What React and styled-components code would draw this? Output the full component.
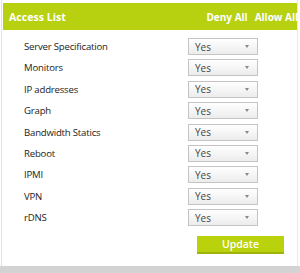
import styled, { createGlobalStyle } from "styled-components";

const Global = createGlobalStyle`
  body {
    margin: 0;
    background: #fff;
    font-family: "Open Sans", "Noto Sans", sans-serif;
  }
`;

const items = [
  "Server Specification",
  "Monitors",
  "IP addresses",
  "Graph",
  "Bandwidth Statics",
  "Reboot",
  "IPMI",
  "VPN",
  "rDNS",
];

function App() {
  return (
    <>
      <Global />
      <Page>
        <Panel>
          <Header>
            <Title>Access List</Title>
            <Actions>
              <Action>Deny All</Action>
              <Action>Allow All</Action>
            </Actions>
          </Header>
          <List>
            {items.map((name) => (
              <Row key={name}>
                <Label>{name}</Label>
                <Select>
                  <span>Yes</span>
                  <Arrow />
                </Select>
              </Row>
            ))}
          </List>
          <Footer>
            <Button>Update</Button>
          </Footer>
        </Panel>
        <Bottom />
      </Page>
    </>
  );
}

const Page = styled.div`
  width: 300px;
  height: 273px;
  overflow: hidden;
  display: flex;
  flex-direction: column;
`;

const Panel = styled.div`
  flex: 1;
  margin-left: 1px;
  width: 297px;
  border-left: 1px solid #e2e2e2;
  border-right: 1px solid #e8e8e8;
  padding-top: 3px;
  box-sizing: border-box;
  display: flex;
  flex-direction: column;
`;

const Header = styled.div`
  height: 27px;
  margin-left: 1px;
  background: #b7d00f;
  display: flex;
  align-items: center;
  justify-content: space-between;
  padding-left: 6px;
  color: #fff;
  font-weight: 700;
  font-size: 10.6px;
  white-space: nowrap;
`;

const Title = styled.div``;

const Actions = styled.div`
  display: flex;
  gap: 7px;
  font-size: 10px;
  margin-right: -1px;
`;

const Action = styled.div``;

const List = styled.div`
  display: flex;
  flex-direction: column;
  gap: 4.4px;
  margin-top: 8px;
  padding-left: 22px;
`;

const Row = styled.div`
  display: grid;
  grid-template-columns: 164px 70px;
  align-items: center;
  height: 17px;
`;

const Label = styled.div`
  font-size: 9.6px;
  letter-spacing: -0.2px;
  color: #222;
`;

const Select = styled.div`
  height: 17px;
  box-sizing: border-box;
  border: 1px solid #c4c4c4;
  background: linear-gradient(#ffffff, #ececec);
  display: flex;
  align-items: center;
  justify-content: space-between;
  padding: 0 8px 0 6px;
  font-size: 10px;
  color: #444;
`;

const Arrow = styled.span`
  width: 0;
  height: 0;
  border-left: 2.5px solid transparent;
  border-right: 2.5px solid transparent;
  border-top: 3.5px solid #888;
`;

const Footer = styled.div`
  display: flex;
  padding-left: 195px;
  margin-top: 10px;
`;

const Button = styled.div`
  width: 87px;
  height: 18px;
  box-sizing: border-box;
  background: #b9d20c;
  border-bottom: 2px solid #9fb40a;
  color: #fff;
  font-size: 10.5px;
  font-weight: 600;
  display: flex;
  align-items: center;
  justify-content: center;
`;

const Bottom = styled.div`
  height: 7px;
  background: #d3d3d3;
`;

export default App;
